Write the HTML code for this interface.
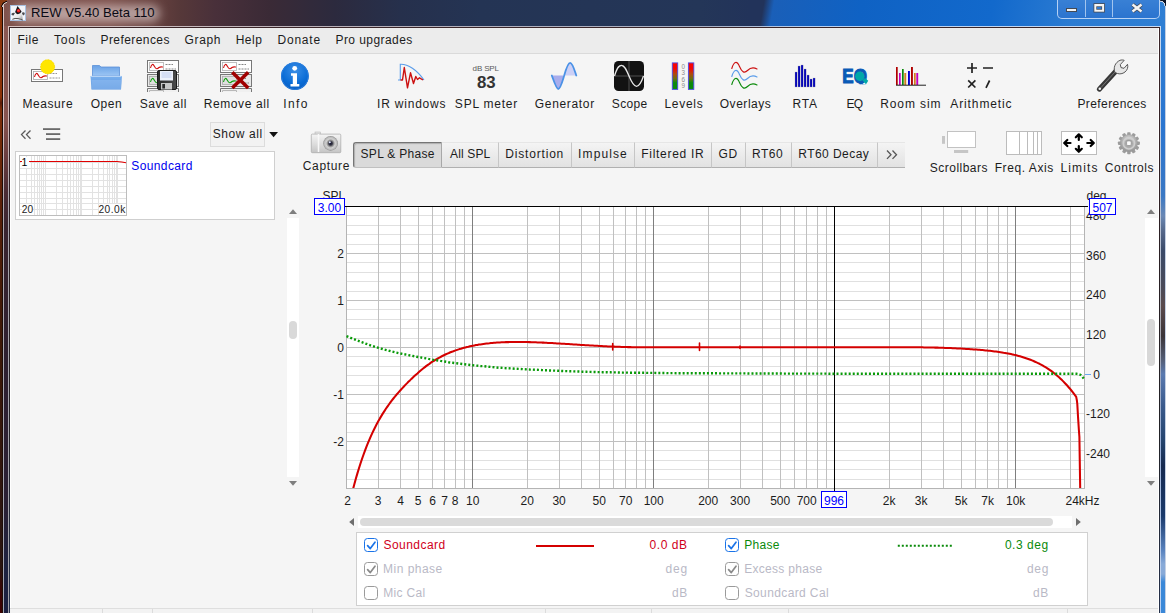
<!DOCTYPE html>
<html><head><meta charset="utf-8"><title>REW V5.40 Beta 110</title>
<style>
html,body{margin:0;padding:0}
body{width:1166px;height:613px;overflow:hidden;position:relative;background:#2b1812;font-family:"Liberation Sans",sans-serif;font-size:12px;letter-spacing:.25px;color:#1c1c1c}
.abs{position:absolute}
svg text{letter-spacing:0}
#frame{position:absolute;left:0;top:0;width:1166px;height:613px;overflow:hidden}
#client{position:absolute;left:10px;top:28px;width:1148px;height:585px;background:#f5f5f5}
.menu{position:absolute;left:11px;top:28px;width:1147px;height:25px;background:#ececec;border-bottom:1px solid #dadada}
.menu span{position:absolute;top:3.9px;line-height:15px;white-space:nowrap}
.t{position:absolute;white-space:nowrap;line-height:15px}
.ax{position:absolute;font-size:12px;letter-spacing:0;line-height:15px;white-space:nowrap;color:#1c1c1c}
.ax.r{text-align:right}.ax.c{text-align:center}
.tab{position:absolute;top:142px;height:26px;line-height:26px;box-sizing:border-box;background:linear-gradient(#f4f4f4,#e2e2e2);border-bottom:1px solid #b0b0b0;border-top:1px solid #e6e6e6;border-right:1px solid #c6c6c6;text-align:center;white-space:nowrap}
.tab span{position:relative;top:-1px}
.cb{position:absolute;width:12px;height:12px;border:1.3px solid #1a73e8;border-radius:3.5px;background:#fff}
.cb.g{border-color:#9a9a9a}
.lg{position:absolute;white-space:nowrap;line-height:15px}
.dis{color:#b9b9c6}
</style></head><body>
<div id="frame">
<!-- title bar background -->
<div class="abs" style="left:0;top:0;width:1166px;height:30px;background:linear-gradient(90deg,#7f524c 0,#7c4f4a 110px,#69423f 150px,#563839 180px,#49303a 215px,#3a2a36 270px,#2c2a3e 335px,#26304c 400px,#243454 480px,#243658 700px,#22335a 750px)"></div>
<div class="abs" style="left:740px;top:0;width:426px;height:30px;background:linear-gradient(100deg,rgba(0,0,0,0) 0,rgba(0,0,0,0) 24px,#1a5fb8 34px,#0f62c4 120px,#1269cc 250px,#2b7bd2 330px,#2f7fd4 100%)"></div>
<!-- title glow -->
<div class="abs" style="left:14px;top:5px;width:146px;height:17px;border-radius:9px;background:rgba(225,212,212,.62);filter:blur(5px)"></div>
<!-- left frame -->
<div class="abs" style="left:0;top:26px;width:10px;height:587px;background:linear-gradient(#8a5853 0,#86544f 95px,#6a3e40 130px,#4a2c34 165px,#3a2530 200px,#2e2030 330px,#2a2034 480px,#1e2240 540px,#1a2040 585px,#3a1030 606px)"></div>
<div class="abs" style="left:0;top:5px;width:3px;height:608px;background:linear-gradient(#8c3408 0,#8a3208 92px,#5a1c08 98px,#7c2e08 104px,#702a08 140px,#5a2008 200px,#421a08 300px,#3a1808 370px,#2e1610 500px,#2a1510 560px,#3a0404 590px,#3a0000 608px)"></div>
<div class="abs" style="left:2px;top:5px;width:1px;height:608px;background:#1c0c08"></div>
<div class="abs" style="left:3px;top:4px;width:1px;height:609px;background:linear-gradient(#dcc6c4 0,#d8c0c0 120px,#b0a8ae 200px,#a8a8b0 400px,#a0a4b4 609px)"></div>
<!-- right frame -->
<div class="abs" style="left:1159px;top:26px;width:7px;height:587px;background:linear-gradient(#2f7fd4 0,#2a75d0 100px,#3a78c4 170px,#6a88b4 190px,#55688a 205px,#3a4a68 225px,#4a4a58 262px,#5a4a4c 280px,#3a3438 310px,#55607a 335px,#5a7ab0 348px,#3a5a8c 380px,#24446e 415px,#162a50 440px,#1a3a6c 490px,#5a84c0 525px,#88aad8 538px,#88aad8 548px,#3a88d8 556px,#3a88d8 587px)"></div>
<div class="abs" style="left:1165px;top:4px;width:1px;height:609px;background:#c4d0e4"></div>
<!-- outer corners -->
<div class="abs" style="left:0;top:0;width:7px;height:7px;background:radial-gradient(circle at 7px 7px,rgba(0,0,0,0) 0,rgba(0,0,0,0) 3.6px,#d6c8c4 4px,#d6c8c4 4.6px,#1a0c08 5px,#1a0c08 5.6px,#8a3a10 6px)"></div>
<div class="abs" style="left:1160px;top:0;width:6px;height:6px;background:radial-gradient(circle at 0 6px,rgba(0,0,0,0) 0,rgba(0,0,0,0) 4.2px,#cfd8e6 4.6px,#cfd8e6 5.2px,#0a1428 5.6px)"></div>
<!-- client border -->
<div class="abs" style="left:8px;top:26px;width:1153px;height:587px;background:linear-gradient(#d8c4c2 0,#d0b8b8 100px,#a8a4ac 180px,#a0a0a8 587px)"></div>
<div class="abs" style="left:1160px;top:26px;width:1px;height:587px;background:linear-gradient(#c8daf2 0,#b8c0d0 230px,#a8a8b0 300px,#9ab0d8 420px,#c4d6f0 560px,#b0ccf4 587px)"></div>
<div class="abs" style="left:8px;top:26px;width:1153px;height:1px;background:linear-gradient(90deg,#d8c4c2 0,#b8b0b8 330px,#a8b0c4 700px,#b8d0f0 800px,#c8daf2 100%)"></div>
<div class="abs" style="left:9px;top:27px;width:1151px;height:586px;background:linear-gradient(#3a2528 0,#2c2024 200px,#222226 400px,#24304a 587px)"></div>
<div class="abs" style="left:10px;top:28px;width:1149px;height:585px;background:#fff"></div>
<div id="client" style="left:11px;width:1147px"></div>
<!-- title icon + text -->
<svg class="abs" style="left:10px;top:5px" width="16" height="16" viewBox="0 0 16 16">
<defs><linearGradient id="gDk" x1="0" y1="0" x2="1" y2="1"><stop offset="0" stop-color="#ffffff"/><stop offset="0.6" stop-color="#e6e6e6"/><stop offset="1" stop-color="#8c8c8c"/></linearGradient></defs>
<rect x="0" y="0" width="16" height="16" fill="#f3f5fa"/><rect x="0.500" y="0.500" width="15" height="15" fill="none" stroke="#a9c2e2"/>
<path d="M5 8 Q2.600 7.400 1.300 9 Q1.500 10.700 3.900 10.300 Z" fill="#4e4e52"/>
<path d="M11.800 7.800 Q13.500 6.400 14.800 8 Q14.900 10 13 10.600 Z" fill="#4e4e52"/>
<path d="M5.500 7.300 Q3.600 11 2.400 14.300 Q5 13 8 13.600 Q10.500 14.200 12.700 15.100 Q12.500 10.500 11.400 6.900 Q9 9.500 5.500 7.300Z" fill="url(#gDk)"/>
<path d="M2.400 14.300 Q5 13 8 13.600 Q10.500 14.200 12.700 15.100" fill="none" stroke="#3a3a3a" stroke-width="0.900"/>
<path d="M7.500 1 L5.100 7 Q6 9.400 8.300 9.100 Q10.600 8.700 11.600 6.600 Z" fill="#17171b"/>
<circle cx="8.500" cy="5.700" r="1.750" fill="#f21a1a"/><circle cx="8.200" cy="5.300" r="0.500" fill="#ff8a8a"/>
</svg>
<div class="abs" style="left:31px;top:4px;font-size:13.1px;letter-spacing:0;line-height:17px;color:#0a0a14;white-space:nowrap">REW V5.40 Beta 110</div>

<!-- window buttons -->
<div class="abs" style="left:1057px;top:-4px;width:101px;height:21px;border:1px solid rgba(205,225,250,.85);border-radius:0 0 5px 5px;background:linear-gradient(#3b82d6,#2b74cf)"></div>
<div class="abs" style="left:1085px;top:0;width:1px;height:17px;background:rgba(190,215,245,.8)"></div>
<div class="abs" style="left:1112px;top:0;width:1px;height:17px;background:rgba(190,215,245,.8)"></div>
<svg class="abs" style="left:1057px;top:0" width="103" height="18" viewBox="0 0 103 18">
<rect x="9.5" y="8.5" width="10" height="3" fill="#f4f4f4" stroke="#444a55"/>
<rect x="36.500" y="3.200" width="11.400" height="9.300" fill="#444a55"/><rect x="37.300" y="4" width="9.800" height="7.700" fill="#f4f4f4"/><rect x="39.300" y="6.300" width="5.800" height="3.400" fill="#444a55"/><rect x="40" y="7" width="4.400" height="2" fill="#2f78d0"/>
<path d="M75.500 4.500L84.500 11.500M84.500 4.500L75.500 11.500" stroke="#444a55" stroke-width="4"/>
<path d="M75.500 4.500L84.500 11.500M84.500 4.500L75.500 11.500" stroke="#f4f4f4" stroke-width="2.4"/>
</svg>

<!-- menu -->
<div class="menu"></div>


<!--ICONS_START--><!-- ICONS -->
<svg class="abs" style="left:0;top:56px" width="1166" height="40" viewBox="0 56 1166 40">
<defs>
<linearGradient id="gFold" x1="0" y1="0" x2="0" y2="1"><stop offset="0" stop-color="#6aa2e6"/><stop offset="1" stop-color="#9cc6f4"/></linearGradient>
<linearGradient id="gFoldB" x1="0" y1="0" x2="0" y2="1"><stop offset="0" stop-color="#7ab0ee"/><stop offset="1" stop-color="#5a96de"/></linearGradient>
<radialGradient id="gInfo" cx="0.5" cy="0.3" r="0.8"><stop offset="0" stop-color="#3a8ee6"/><stop offset="0.6" stop-color="#0a6cd6"/><stop offset="1" stop-color="#0a58b8"/></radialGradient>
<linearGradient id="gLev" x1="0" y1="0" x2="0" y2="1"><stop offset="0" stop-color="#ff0000"/><stop offset="0.22" stop-color="#f00808"/><stop offset="0.42" stop-color="#b04a10"/><stop offset="0.6" stop-color="#6a7010"/><stop offset="0.75" stop-color="#0a8a0a"/><stop offset="1" stop-color="#0a8a0a"/></linearGradient>
<linearGradient id="gFl" x1="0" y1="0" x2="1" y2="0"><stop offset="0" stop-color="#2a2a2a"/><stop offset="1" stop-color="#4a4a4a"/></linearGradient>
<linearGradient id="gWr" x1="0" y1="0" x2="1" y2="1"><stop offset="0" stop-color="#8a8a8a"/><stop offset="0.5" stop-color="#2a2a2a"/><stop offset="1" stop-color="#6a6a6a"/></linearGradient>
</defs>
<!-- Measure -->
<rect x="31.500" y="69.500" width="31" height="12" fill="#fff" stroke="#777" stroke-width="1"/>
<rect x="33.500" y="71.500" width="14" height="8" fill="#fff" stroke="#aaa" stroke-width="0.800"/>
<path d="M34.500 77 C35.500 72.500 37 72.500 38.500 75.500 C40 78.500 41.500 78 43 76.500 C44.500 75.500 46 76 47 76" fill="none" stroke="#d01010" stroke-width="1.100"/>
<path d="M49.500 73.500H57M49.500 78H60" stroke="#888" stroke-width="0.900" stroke-dasharray="2 1"/>
<circle cx="47.600" cy="66.800" r="7.200" fill="#ffe600"/>
<circle cx="47.600" cy="66.800" r="7" fill="none" stroke="#f4d400" stroke-width="0.800" stroke-dasharray="1.500 1.500"/>
<!-- Open -->
<path d="M92.500 65.500 H99.500 L101 67 H119.500 V76 H92.500 Z" fill="url(#gFold)" stroke="#5a90d8" stroke-width="0.800"/>
<path d="M90.500 76 H122 L121 89.500 H91.500 Z" fill="url(#gFoldB)"/>
<path d="M91 76.300H121.500" stroke="#c4dcf8" stroke-width="1"/>
<path d="M91.500 80 H121.200 L121 89.500 H91.700 Z" fill="#8fbcf0" opacity="0.550"/>
<!-- Save all -->
<g>
<rect x="147.500" y="60.500" width="31" height="12" fill="#fff" stroke="#777"/>
<rect x="149.500" y="62.500" width="14" height="8" fill="#fff" stroke="#b0b0b0" stroke-width="0.800"/>
<path d="M150.500 68 C151.500 63.500 153 63.500 154.500 66.500 C156 69.500 157.500 69 159 67.500 C160.500 66.500 162 67 163 67" fill="none" stroke="#d01010" stroke-width="1.100"/>
<path d="M165.500 64.500H173M165.500 69H176" stroke="#777" stroke-width="0.900" stroke-dasharray="2 1"/>
<rect x="147.500" y="74.500" width="31" height="12" fill="#e8e8e8" stroke="#777"/>
<rect x="149.500" y="76.500" width="14" height="8" fill="#e0e0e0" stroke="#aaa" stroke-width="0.800"/>
<path d="M150.500 82 C151.500 77.500 153 77.500 154.500 80.500 C156 83.500 157.500 83 159 81.500 C160.500 80.500 162 81 163 81" fill="none" stroke="#10a010" stroke-width="1.100"/>
<path d="M165.500 78.500H173M165.500 83H176" stroke="#777" stroke-width="0.900" stroke-dasharray="2 1"/>
<path d="M147.500 92 V88.500 H178.500 V92" fill="#f0f0f0" stroke="#777"/>
<path d="M149.500 92V90.500H163.500V92" fill="none" stroke="#aaa" stroke-width="0.800"/>
</g>
<rect x="157.500" y="70.500" width="19" height="19" rx="1.500" fill="url(#gFl)" stroke="#1a1a1a"/>
<rect x="160" y="71" width="13" height="9.500" fill="#eef2fc"/>
<path d="M161.500 73H171.500M161.500 75H171.500M161.500 77H171.500" stroke="#a0b4e4" stroke-width="0.600"/>
<rect x="161" y="83" width="11" height="6.500" fill="#c8c8c8"/>
<rect x="162.300" y="84" width="2.700" height="4.500" fill="#2a2a2a"/>
<!-- Remove all -->
<g transform="translate(73 0)">
<rect x="147.500" y="60.500" width="31" height="12" fill="#fff" stroke="#777"/>
<rect x="149.500" y="62.500" width="14" height="8" fill="#fff" stroke="#b0b0b0" stroke-width="0.800"/>
<path d="M150.500 68 C151.500 63.500 153 63.500 154.500 66.500 C156 69.500 157.500 69 159 67.500 C160.500 66.500 162 67 163 67" fill="none" stroke="#d01010" stroke-width="1.100"/>
<path d="M165.500 64.500H173M165.500 69H176" stroke="#777" stroke-width="0.900" stroke-dasharray="2 1"/>
<rect x="147.500" y="74.500" width="31" height="12" fill="#e8e8e8" stroke="#777"/>
<rect x="149.500" y="76.500" width="14" height="8" fill="#e0e0e0" stroke="#aaa" stroke-width="0.800"/>
<path d="M150.500 82 C151.500 77.500 153 77.500 154.500 80.500 C156 83.500 157.500 83 159 81.500 C160.500 80.500 162 81 163 81" fill="none" stroke="#10a010" stroke-width="1.100"/>
<path d="M165.500 78.500H173M165.500 83H176" stroke="#777" stroke-width="0.900" stroke-dasharray="2 1"/>
<path d="M147.500 92 V88.500 H178.500 V92" fill="#f0f0f0" stroke="#777"/>
<path d="M149.500 92V90.500H163.500V92" fill="none" stroke="#aaa" stroke-width="0.800"/>
</g>
<path d="M232.300 72.200L248.200 88M248.200 72.200L232.300 88" stroke="#a00000" stroke-width="3.500"/>
<!-- Info -->
<circle cx="294.900" cy="76.100" r="13.900" fill="url(#gInfo)"/>
<circle cx="294.900" cy="76.100" r="13.400" fill="none" stroke="#2a7ede" stroke-width="1"/>
<circle cx="294.700" cy="68.300" r="2.400" fill="#fff"/>
<path d="M291 73.200H297V84H299.300V86.600H290.500V84H292.800V75.800H291Z" fill="#fff"/>
<!-- IR windows -->
<path d="M398 80H400.300V64.200C408 63.800 417 70 424 80" fill="none" stroke="#5a9cea" stroke-width="1.100"/>
<path d="M400.500 80H402.500L404.300 67.500L407.500 87.800L410.500 72.800L413.500 83.500L415.800 76.500L417.500 79.500L419.500 77.800L423 80" fill="none" stroke="#cc1010" stroke-width="1.400" stroke-linejoin="round"/>
<!-- SPL meter -->
<text x="472.600" y="71.300" font-size="8" fill="#5a5a5a" font-family="Liberation Sans, sans-serif" textLength="26.400" lengthAdjust="spacing">dB SPL</text>
<text x="486.300" y="88.200" font-size="16.800" font-weight="bold" fill="#333" text-anchor="middle" font-family="Liberation Sans, sans-serif">83</text>
<!-- Generator -->
<path d="M551.800 75.500 C554.500 83 556.500 89 558.200 89 C560.500 89 562.500 81 564.200 75.500 Z" fill="#9aa0ea" opacity="0.850"/>
<path d="M564.200 75.500 C566 69 568 62.800 570.200 62.800 C572.500 62.800 574.500 70 576.300 75.500 Z" fill="#c8ccf6" opacity="0.900"/>
<path d="M551.800 75.500 C554.500 83 556.500 89 558.200 89 C560.500 89 562.500 81 564.200 75.500 C566 69 568 62.800 570.200 62.800 C572.500 62.800 574.500 70 576.300 75.500" fill="none" stroke="#4a92e6" stroke-width="1.800" stroke-linecap="round"/>
<!-- Scope -->
<rect x="614" y="61" width="30" height="30" rx="4.500" fill="#121212"/>
<path d="M614 76H644M629 61V91" stroke="#6a6a6a" stroke-width="0.700"/>
<path d="M614.500 76 C617.500 66 619.500 65.300 621.500 65.300 C624.500 65.300 626.500 70 629 76 C631.500 82 633.500 86.300 636.500 86.300 C638.500 86.300 640.500 85 643.500 76" fill="none" stroke="#e8e8e8" stroke-width="1.300"/>
<!-- Levels -->
<rect x="672.300" y="62.900" width="5.400" height="26.500" fill="url(#gLev)" stroke="#4a4ae6" stroke-width="0.900"/>
<rect x="688.400" y="62.900" width="5.400" height="26.500" fill="url(#gLev)" stroke="#4a4ae6" stroke-width="0.900"/>
<g font-size="6.300" fill="#8a8a8a" text-anchor="middle" font-family="Liberation Sans, sans-serif"><text x="683.200" y="68.800">0</text><text x="683.200" y="75.200">3</text><text x="683.200" y="81.600">6</text><text x="683.200" y="88">9</text></g>
<!-- Overlays -->
<g fill="none" stroke-width="1.150" stroke-linecap="round">
<path d="M731.800 68.500 C734 61 737 60.500 739.500 66.500 C742 72.500 744.500 73.500 747.500 70.500 C751 67 754 67.500 757 69" stroke="#cc1010"/>
<path d="M731.800 76.500 C734 69 737 68.500 739.500 74.500 C742 80.500 744.500 81.500 747.500 78.500 C751 75 754 75.500 757 77" stroke="#5a9cea"/>
<path d="M731.800 84.500 C734 77 737 76.500 739.500 82.500 C742 88.500 744.500 89.500 747.500 86.500 C751 83 754 83.500 757 85" stroke="#0a8a0a"/>
</g>
<!-- RTA -->
<g fill="#0000b8" stroke="#aaa" stroke-width="0.300">
<rect x="795" y="72" width="2.100" height="15"/><rect x="798" y="66" width="2.100" height="21"/><rect x="801" y="65" width="2.100" height="22"/><rect x="804" y="69" width="2.100" height="18"/><rect x="807" y="75" width="2.100" height="12"/><rect x="810" y="79" width="2.100" height="8"/><rect x="813" y="78" width="2.100" height="9"/>
</g>
<!-- EQ -->
<clipPath id="eqc"><rect x="838" y="60" width="34" height="24.300"/></clipPath>
<g clip-path="url(#eqc)">
<text x="842.300" y="83.400" font-size="20" font-weight="bold" fill="#0a5ab6" stroke="#0a5ab6" stroke-width="1.100" font-family="Liberation Sans, sans-serif" textLength="24.600" lengthAdjust="spacingAndGlyphs">EQ</text>
</g>
<circle cx="859.800" cy="76.200" r="4.700" fill="#00a8a8"/>
<path d="M862.300 80.300 L866 84.300 L868.200 80.800 L865 78 Z" fill="#00a8a8"/>
<!-- Room sim -->
<g>
<rect x="896" y="67" width="1.700" height="18" fill="#b00000"/><rect x="899" y="73" width="1.700" height="12" fill="#c000c0"/><rect x="902" y="69" width="1.700" height="16" fill="#0a8a0a"/><rect x="904.300" y="73" width="1.900" height="12" fill="#d08020"/><rect x="908" y="71" width="1.900" height="14" fill="#0000d0"/><rect x="911" y="67" width="1.900" height="18" fill="#b00000"/><rect x="914" y="73" width="1.700" height="12" fill="#d08020"/><rect x="916.300" y="73" width="1.900" height="12" fill="#c000c0"/>
<rect x="896" y="84.700" width="30" height="1" fill="#222"/>
</g>
<!-- Arithmetic -->
<path d="M967 68H977M972 63V73M983 68H993M968.200 80.300L975.400 87.500M975.400 80.300L968.200 87.500M989.600 80.500L986 87.800" stroke="#222" stroke-width="1.700" fill="none"/>
<!-- Preferences wrench -->
<path d="M1099.300 89.200 L1116 71" stroke="url(#gWr)" stroke-width="5" stroke-linecap="round"/>
<path d="M1099.300 89.200 L1116 71" stroke="#3a3a3a" stroke-width="3.200" stroke-linecap="round"/>
<path d="M1101 87.500 L1115 72" stroke="#7a7a7a" stroke-width="0.900" stroke-linecap="round"/>
<circle cx="1099.800" cy="88.800" r="1.300" fill="#f0f0f0"/>
<path d="M1115 72.500 C1113 68 1115 62.500 1120 60.300 C1121.500 59.800 1123 59.900 1124.200 60.300 L1120.300 64.600 L1121 67.600 L1124 68.300 L1127.500 64.300 C1128.300 67 1127.500 70 1125 72 C1122.500 74 1119.500 74.200 1117.500 73.500 Z" fill="#e6e6e6" stroke="#4a4a4a" stroke-width="0.900"/>
</svg>

<!-- second row icons -->
<svg class="abs" style="left:300px;top:126px" width="860" height="34" viewBox="300 126 860 34">
<defs>
<linearGradient id="gCam" x1="0" y1="0" x2="0" y2="1"><stop offset="0" stop-color="#f4f4f4"/><stop offset="0.55" stop-color="#dcdcdc"/><stop offset="1" stop-color="#c4c4c4"/></linearGradient>
<radialGradient id="gLens" cx="0.5" cy="0.5" r="0.5"><stop offset="0" stop-color="#101028"/><stop offset="0.25" stop-color="#3a3a48"/><stop offset="0.42" stop-color="#8e8e8e"/><stop offset="0.62" stop-color="#d2d2d2"/><stop offset="0.85" stop-color="#bcbcbc"/><stop offset="1" stop-color="#8c8c8c"/></radialGradient>
<radialGradient id="gGear" cx="0.5" cy="0.35" r="0.7"><stop offset="0" stop-color="#dcdcdc"/><stop offset="1" stop-color="#8e8e8e"/></radialGradient>
</defs>
<!-- camera -->
<rect x="315" y="132" width="5.500" height="2.500" fill="#e4e4e4" stroke="#b0b0b0" stroke-width="0.500"/>
<rect x="311.300" y="134.100" width="29.500" height="18.600" rx="1" fill="url(#gCam)" stroke="#a8a8a8" stroke-width="0.700"/>
<path d="M318.500 134V152" stroke="#f8f8f8" stroke-width="1.500"/>
<circle cx="330.600" cy="143.400" r="7.300" fill="url(#gLens)"/>
<circle cx="329.800" cy="142.300" r="1" fill="#dfe6ff"/>
<!-- Scrollbars -->
<rect x="947.500" y="131.500" width="28" height="16" fill="#fff" stroke="#c2c2c2"/>
<rect x="942" y="136" width="3" height="7.800" fill="#c6c6c6"/>
<rect x="954" y="150" width="14.200" height="3" fill="#c6c6c6"/>
<!-- Freq axis -->
<rect x="1006.500" y="131.500" width="35" height="23" fill="#fff" stroke="#bcbcbc"/>
<path d="M1019.500 131.500V154.500M1027.500 131.500V154.500M1033.500 131.500V154.500M1037.500 131.500V154.500" stroke="#bcbcbc" shape-rendering="crispEdges"/>
<!-- Limits -->
<rect x="1061.500" y="131.500" width="35" height="23" fill="#fff" stroke="#bcbcbc"/>
<g stroke="#000" stroke-width="2.200" fill="none" stroke-linecap="round" stroke-linejoin="round">
<path d="M1078.800 140V134.600M1075.800 137.300L1078.800 134.300L1081.800 137.300"/>
<path d="M1078.800 146V151.600M1075.800 148.800L1078.800 151.800L1081.800 148.800"/>
<path d="M1070.500 143H1064.500M1067.300 140L1064.200 143L1067.300 146"/>
<path d="M1087.300 143H1093.500M1090.700 140L1093.800 143L1090.700 146"/>
</g>
<!-- Controls gear -->
<g transform="translate(1128.900 143.200)">
<g fill="#9c9c9c">
<rect x="-1.700" y="-11" width="3.400" height="22" rx="0.800"/>
<rect x="-1.700" y="-11" width="3.400" height="22" rx="0.800" transform="rotate(30)"/>
<rect x="-1.700" y="-11" width="3.400" height="22" rx="0.800" transform="rotate(60)"/>
<rect x="-1.700" y="-11" width="3.400" height="22" rx="0.800" transform="rotate(90)"/>
<rect x="-1.700" y="-11" width="3.400" height="22" rx="0.800" transform="rotate(120)"/>
<rect x="-1.700" y="-11" width="3.400" height="22" rx="0.800" transform="rotate(150)"/>
</g>
<circle r="8.700" fill="url(#gGear)"/>
<circle r="8.700" fill="none" stroke="#9a9a9a" stroke-width="0.500"/>
<circle r="5.700" fill="none" stroke="#cfcfcf" stroke-width="1.500"/>
<circle r="4" fill="#a8a8a8"/>
<rect x="-2.300" y="-2.300" width="4.600" height="4.600" rx="1.200" fill="#fbfbfb" stroke="#8e8e8e" stroke-width="0.700"/>
</g>
</svg>
<!--ICONS_END-->

<!-- left panel -->
<svg class="abs" style="left:18px;top:124px" width="48" height="20" viewBox="0 0 48 20">
<path d="M7.500 6.500L3.500 10.600L7.500 14.700M12.500 6.500L8.500 10.600L12.500 14.700" fill="none" stroke="#5a5a5a" stroke-width="1.300"/>
<g fill="#6a6a6a"><rect x="25" y="4.200" width="17.200" height="1.800"/><rect x="28" y="9.200" width="14.200" height="1.800"/><rect x="28" y="14.200" width="14.200" height="1.800"/></g>
</svg>
<div class="abs" style="left:210px;top:122px;width:53px;height:23px;border:1px solid #dcdcdc;background:#f2f2f2;"></div>
<svg class="abs" style="left:268px;top:131px" width="12" height="8" viewBox="0 0 12 8"><path d="M1.200 1L10 1L5.600 6.300Z" fill="#111"/></svg>
<div class="abs" style="left:15px;top:151px;width:260px;height:69px;box-sizing:border-box;border:1px solid #cfcfcf;background:#fff"></div>
<svg class="abs" style="left:19px;top:155px" width="108" height="61" viewBox="0 0 108 61"><rect x="0.5" y="0.5" width="107" height="60" fill="#fff" stroke="#bdbdbd"/><g shape-rendering="crispEdges" fill="#e2e2e2">
<rect x="7" y="1" width="1" height="59"/>
<rect x="12" y="1" width="1" height="59"/>
<rect x="15" y="1" width="1" height="59"/>
<rect x="18" y="1" width="1" height="59"/>
<rect x="20" y="1" width="1" height="59"/>
<rect x="22" y="1" width="1" height="59"/>
<rect x="24" y="1" width="1" height="59"/>
<rect x="26" y="1" width="1" height="59"/>
<rect x="37" y="1" width="1" height="59"/>
<rect x="43" y="1" width="1" height="59"/>
<rect x="48" y="1" width="1" height="59"/>
<rect x="51" y="1" width="1" height="59"/>
<rect x="54" y="1" width="1" height="59"/>
<rect x="57" y="1" width="1" height="59"/>
<rect x="59" y="1" width="1" height="59"/>
<rect x="61" y="1" width="1" height="59"/>
<rect x="62" y="1" width="1" height="59"/>
<rect x="73" y="1" width="1" height="59"/>
<rect x="79" y="1" width="1" height="59"/>
<rect x="84" y="1" width="1" height="59"/>
<rect x="88" y="1" width="1" height="59"/>
<rect x="90" y="1" width="1" height="59"/>
<rect x="93" y="1" width="1" height="59"/>
<rect x="95" y="1" width="1" height="59"/>
<rect x="97" y="1" width="1" height="59"/>
<rect x="98" y="1" width="1" height="59"/>
<rect x="1" y="7" width="106" height="1"/>
<rect x="1" y="13" width="106" height="1"/>
<rect x="1" y="19" width="106" height="1"/>
<rect x="1" y="25" width="106" height="1"/>
<rect x="1" y="31" width="106" height="1"/>
<rect x="1" y="37" width="106" height="1"/>
<rect x="1" y="43" width="106" height="1"/>
<rect x="1" y="48" width="106" height="1"/>
<rect x="1" y="54" width="106" height="1"/>
</g><rect x="2" y="2" width="9" height="11" fill="#fff"/><path d="M1 6.5H3M10 6.5H98C102 6.6 105 7.2 107 7.8" stroke="#e00000" stroke-width="1.2" fill="none"/></svg>
<div class="abs" style="left:21.5px;top:155.5px;font-size:10.5px;line-height:12px;color:#000">1</div>
<div class="abs" style="left:21.700px;top:203.500px;font-size:10.200px;line-height:11px;color:#222;letter-spacing:.2px;background:#fff">20</div>
<div class="abs" style="left:98.500px;top:203.500px;font-size:10.200px;line-height:11px;color:#222;letter-spacing:.45px;background:#fff">20.0k</div>

<!-- left vertical scrollbar -->
<div class="abs" style="left:287px;top:218px;width:12px;height:259px;background:#fff"></div>
<div class="abs" style="left:289px;top:321px;width:8px;height:18px;border-radius:4px;background:#d9d9d9"></div>
<svg class="abs" style="left:288px;top:208px" width="10" height="7" viewBox="0 0 10 7"><path d="M1 6L5 1.200L9 6Z" fill="#7e7e7e"/></svg>
<svg class="abs" style="left:288px;top:480px" width="10" height="7" viewBox="0 0 10 7"><path d="M1 1L5 5.800L9 1Z" fill="#7e7e7e"/></svg>
<!-- right vertical scrollbar -->
<div class="abs" style="left:1145px;top:218px;width:13px;height:259px;background:#fff"></div>
<div class="abs" style="left:1147px;top:319px;width:8px;height:47px;border-radius:4px;background:#d8d8d8"></div>
<svg class="abs" style="left:1146px;top:208px" width="10" height="7" viewBox="0 0 10 7"><path d="M1 6L5 1.200L9 6Z" fill="#7e7e7e"/></svg>
<svg class="abs" style="left:1146px;top:480px" width="10" height="7" viewBox="0 0 10 7"><path d="M1 1L5 5.800L9 1Z" fill="#7e7e7e"/></svg>

<!-- capture -->

<!-- tabs -->
<div class="tab" style="left:353px;width:89px;background:#dadada;border:1px solid #757575;border-right-color:#a8a8a8;border-bottom-color:#c0c0c0;border-radius:3px 0 0 3px;box-shadow:inset 1px 1px 1px rgba(0,0,0,.2)"></div>
<div class="tab" style="left:442px;width:57px"></div>
<div class="tab" style="left:499px;width:73px"></div>
<div class="tab" style="left:572px;width:63px"></div>
<div class="tab" style="left:635px;width:77px"></div>
<div class="tab" style="left:712px;width:34px"></div>
<div class="tab" style="left:746px;width:46px"></div>
<div class="tab" style="left:792px;width:86px"></div>
<div class="tab" style="left:878px;width:27px;border-right:none"></div>
<svg class="abs" style="left:884px;top:146.6px" width="16" height="16" viewBox="0 0 16 16"><path d="M3 3.500L7 7.700L3 11.900M8.500 3.500L12.500 7.700L8.500 11.900" fill="none" stroke="#555" stroke-width="1.300"/></svg>

<!-- right tool labels -->

<!-- chart -->
<div class="ax" style="left:322.500px;top:189px">SPL</div>
<div class="ax" style="left:1086.5px;top:189px">deg</div>
<svg class="abs" style="left:0;top:0" width="1166" height="613" viewBox="0 0 1166 613">
<rect x="346" y="206" width="739" height="282" fill="#fff"/>
<g shape-rendering="crispEdges">
<rect x="346" y="479" width="739" height="1" fill="#e0e0e0"/>
<rect x="346" y="469" width="739" height="1" fill="#e0e0e0"/>
<rect x="346" y="460" width="739" height="1" fill="#e0e0e0"/>
<rect x="346" y="450" width="739" height="1" fill="#e0e0e0"/>
<rect x="346" y="441" width="739" height="1" fill="#c0c0c0"/>
<rect x="346" y="432" width="739" height="1" fill="#e0e0e0"/>
<rect x="346" y="422" width="739" height="1" fill="#e0e0e0"/>
<rect x="346" y="413" width="739" height="1" fill="#e0e0e0"/>
<rect x="346" y="403" width="739" height="1" fill="#e0e0e0"/>
<rect x="346" y="394" width="739" height="1" fill="#c0c0c0"/>
<rect x="346" y="385" width="739" height="1" fill="#e0e0e0"/>
<rect x="346" y="375" width="739" height="1" fill="#e0e0e0"/>
<rect x="346" y="366" width="739" height="1" fill="#e0e0e0"/>
<rect x="346" y="356" width="739" height="1" fill="#e0e0e0"/>
<rect x="346" y="347" width="739" height="1" fill="#c0c0c0"/>
<rect x="346" y="338" width="739" height="1" fill="#e0e0e0"/>
<rect x="346" y="328" width="739" height="1" fill="#e0e0e0"/>
<rect x="346" y="319" width="739" height="1" fill="#e0e0e0"/>
<rect x="346" y="309" width="739" height="1" fill="#e0e0e0"/>
<rect x="346" y="300" width="739" height="1" fill="#c0c0c0"/>
<rect x="346" y="291" width="739" height="1" fill="#e0e0e0"/>
<rect x="346" y="281" width="739" height="1" fill="#e0e0e0"/>
<rect x="346" y="272" width="739" height="1" fill="#e0e0e0"/>
<rect x="346" y="262" width="739" height="1" fill="#e0e0e0"/>
<rect x="346" y="253" width="739" height="1" fill="#c0c0c0"/>
<rect x="346" y="244" width="739" height="1" fill="#e0e0e0"/>
<rect x="346" y="234" width="739" height="1" fill="#e0e0e0"/>
<rect x="346" y="225" width="739" height="1" fill="#e0e0e0"/>
<rect x="346" y="215" width="739" height="1" fill="#e0e0e0"/>
<rect x="378" y="206" width="1" height="282" fill="#c0c0c0"/>
<rect x="400" y="206" width="1" height="282" fill="#c0c0c0"/>
<rect x="418" y="206" width="1" height="282" fill="#c0c0c0"/>
<rect x="432" y="206" width="1" height="282" fill="#c0c0c0"/>
<rect x="444" y="206" width="1" height="282" fill="#c0c0c0"/>
<rect x="455" y="206" width="1" height="282" fill="#c0c0c0"/>
<rect x="464" y="206" width="1" height="282" fill="#c0c0c0"/>
<rect x="472" y="206" width="1" height="282" fill="#7e7e7e"/>
<rect x="527" y="206" width="1" height="282" fill="#c0c0c0"/>
<rect x="559" y="206" width="1" height="282" fill="#c0c0c0"/>
<rect x="581" y="206" width="1" height="282" fill="#c0c0c0"/>
<rect x="599" y="206" width="1" height="282" fill="#c0c0c0"/>
<rect x="613" y="206" width="1" height="282" fill="#c0c0c0"/>
<rect x="625" y="206" width="1" height="282" fill="#c0c0c0"/>
<rect x="636" y="206" width="1" height="282" fill="#c0c0c0"/>
<rect x="645" y="206" width="1" height="282" fill="#c0c0c0"/>
<rect x="653" y="206" width="1" height="282" fill="#7e7e7e"/>
<rect x="708" y="206" width="1" height="282" fill="#c0c0c0"/>
<rect x="740" y="206" width="1" height="282" fill="#c0c0c0"/>
<rect x="762" y="206" width="1" height="282" fill="#c0c0c0"/>
<rect x="780" y="206" width="1" height="282" fill="#c0c0c0"/>
<rect x="794" y="206" width="1" height="282" fill="#c0c0c0"/>
<rect x="806" y="206" width="1" height="282" fill="#c0c0c0"/>
<rect x="817" y="206" width="1" height="282" fill="#c0c0c0"/>
<rect x="826" y="206" width="1" height="282" fill="#c0c0c0"/>
<rect x="834" y="206" width="1" height="282" fill="#7e7e7e"/>
<rect x="889" y="206" width="1" height="282" fill="#c0c0c0"/>
<rect x="921" y="206" width="1" height="282" fill="#c0c0c0"/>
<rect x="943" y="206" width="1" height="282" fill="#c0c0c0"/>
<rect x="961" y="206" width="1" height="282" fill="#c0c0c0"/>
<rect x="975" y="206" width="1" height="282" fill="#c0c0c0"/>
<rect x="987" y="206" width="1" height="282" fill="#c0c0c0"/>
<rect x="998" y="206" width="1" height="282" fill="#c0c0c0"/>
<rect x="1007" y="206" width="1" height="282" fill="#c0c0c0"/>
<rect x="1015" y="206" width="1" height="282" fill="#7e7e7e"/>
<rect x="1070" y="206" width="1" height="282" fill="#c0c0c0"/>
<rect x="346" y="206" width="1" height="283" fill="#b4b4b4"/>
<rect x="1084" y="206" width="1" height="283" fill="#b4b4b4"/>
<rect x="346" y="488" width="739" height="1" fill="#b4b4b4"/>
<rect x="345" y="206" width="743" height="1" fill="#000"/>
<rect x="834" y="206" width="1" height="286" fill="#000"/>
<rect x="1085" y="374" width="6" height="1" fill="#6aa8f0"/>
</g>
<clipPath id="pc"><rect x="346" y="206" width="739" height="282"/></clipPath>
<g clip-path="url(#pc)" fill="none" stroke-linejoin="round" stroke-linecap="round">
<polyline points="352.4,491.0 352.9,489.6 354.4,484.0 355.9,478.6 357.4,473.4 358.9,468.5 360.4,463.8 361.9,459.3 363.4,455.0 364.9,450.9 366.4,446.9 367.9,443.2 369.4,439.6 370.9,436.2 372.4,432.9 373.9,429.7 375.4,426.7 376.9,423.8 378.4,421.1 379.9,418.4 381.4,415.9 382.9,413.4 384.4,411.1 385.9,408.8 387.4,406.6 388.9,404.5 390.4,402.4 391.9,400.4 393.4,398.5 394.9,396.7 396.4,394.8 397.9,393.1 399.4,391.4 400.9,389.7 402.4,388.1 403.9,386.5 405.4,384.9 406.9,383.4 408.4,381.8 409.9,380.4 411.4,378.9 412.9,377.5 414.4,376.1 415.9,374.7 417.4,373.4 418.9,372.0 420.4,370.7 421.9,369.5 423.4,368.3 424.9,367.1 426.4,365.9 427.9,364.8 429.4,363.8 430.9,362.7 432.4,361.7 433.9,360.8 435.4,359.8 436.9,359.0 438.4,358.1 439.9,357.3 441.4,356.5 442.9,355.7 444.4,355.0 445.9,354.3 447.4,353.6 448.9,353.0 450.4,352.3 451.9,351.7 453.4,351.2 454.9,350.6 456.4,350.1 457.9,349.6 459.4,349.1 460.9,348.7 462.4,348.2 463.9,347.8 465.4,347.4 466.9,347.0 468.4,346.7 469.9,346.3 471.4,346.0 472.9,345.7 474.4,345.4 475.9,345.1 477.4,344.9 478.9,344.6 480.4,344.4 481.9,344.2 483.4,344.0 484.9,343.8 486.4,343.6 487.9,343.4 489.4,343.3 490.9,343.1 492.4,343.0 493.9,342.8 495.4,342.7 496.9,342.6 498.4,342.5 499.9,342.4 501.4,342.3 502.9,342.3 504.4,342.2 505.9,342.1 507.4,342.1 508.9,342.1 510.4,342.0 511.9,342.0 513.4,342.0 514.9,342.0 516.4,341.9 517.9,341.9 519.4,341.9 520.9,342.0 522.4,342.0 523.9,342.0 525.4,342.0 526.9,342.0 528.4,342.1 529.9,342.1 531.4,342.2 532.9,342.2 534.4,342.3 535.9,342.3 537.4,342.4 538.9,342.4 540.4,342.5 541.9,342.6 543.4,342.6 544.9,342.7 546.4,342.8 547.9,342.9 549.4,343.0 550.9,343.0 552.4,343.1 553.9,343.2 555.4,343.3 556.9,343.4 558.4,343.5 559.9,343.6 561.4,343.7 562.9,343.7 564.4,343.8 565.9,343.9 567.4,344.0 568.9,344.1 570.4,344.2 571.9,344.3 573.4,344.4 574.9,344.5 576.4,344.6 577.9,344.7 579.4,344.8 580.9,344.9 582.4,345.0 583.9,345.1 585.4,345.2 586.9,345.2 588.4,345.3 589.9,345.4 591.4,345.5 592.9,345.6 594.4,345.7 595.9,345.8 597.4,345.8 598.9,345.9 600.4,346.0 601.9,346.1 603.4,346.2 604.9,346.2 606.4,346.3 607.9,346.4 609.4,346.4 610.9,346.5 612.4,346.6 613.9,346.6 615.4,346.7 616.9,346.7 618.4,346.8 619.9,346.8 621.4,346.9 622.9,346.9 624.4,347.0 625.9,347.0 627.4,347.1 628.9,347.1 630.4,347.1 631.9,347.2 633.4,347.2 634.9,347.2 636.4,347.3 637.9,347.3 639.4,347.3 640.0,347.3 646.0,347.3 652.0,347.3 658.0,347.3 664.0,347.3 670.0,347.3 676.0,347.3 682.0,347.3 688.0,347.3 694.0,347.3 700.0,347.3 706.0,347.3 712.0,347.3 718.0,347.3 724.0,347.3 730.0,347.3 736.0,347.3 742.0,347.3 748.0,347.2 754.0,347.2 760.0,347.2 766.0,347.2 772.0,347.2 778.0,347.2 784.0,347.2 790.0,347.2 796.0,347.2 802.0,347.2 808.0,347.2 814.0,347.2 820.0,347.2 826.0,347.2 832.0,347.2 834.0,347.2 835.5,347.2 837.0,347.2 838.5,347.2 840.0,347.3 841.5,347.3 843.0,347.3 844.5,347.3 846.0,347.3 847.5,347.3 849.0,347.3 850.5,347.3 852.0,347.3 853.5,347.3 855.0,347.3 856.5,347.3 858.0,347.3 859.5,347.3 861.0,347.3 862.5,347.3 864.0,347.3 865.5,347.3 867.0,347.3 868.5,347.3 870.0,347.3 871.5,347.3 873.0,347.3 874.5,347.3 876.0,347.3 877.5,347.2 879.0,347.2 880.5,347.2 882.0,347.2 883.5,347.2 885.0,347.2 886.5,347.2 888.0,347.2 889.5,347.2 891.0,347.2 892.5,347.2 894.0,347.2 895.5,347.2 897.0,347.2 898.5,347.2 900.0,347.2 901.5,347.2 903.0,347.2 904.5,347.2 906.0,347.2 907.5,347.2 909.0,347.2 910.5,347.2 912.0,347.2 913.5,347.2 915.0,347.2 916.5,347.3 918.0,347.3 919.5,347.3 921.0,347.3 922.5,347.3 924.0,347.4 925.5,347.4 927.0,347.4 928.5,347.4 930.0,347.5 931.5,347.5 933.0,347.5 934.5,347.6 936.0,347.6 937.5,347.6 939.0,347.7 940.5,347.7 942.0,347.8 943.5,347.8 945.0,347.9 946.5,347.9 948.0,348.0 949.5,348.0 951.0,348.1 952.5,348.2 954.0,348.2 955.5,348.3 957.0,348.4 958.5,348.4 960.0,348.5 961.5,348.6 963.0,348.7 964.5,348.8 966.0,348.9 967.5,349.0 969.0,349.1 970.5,349.2 972.0,349.3 973.5,349.4 975.0,349.5 976.5,349.6 978.0,349.7 979.5,349.8 981.0,350.0 982.5,350.1 984.0,350.2 985.5,350.4 987.0,350.5 988.5,350.7 990.0,350.8 991.5,351.0 993.0,351.2 994.5,351.4 996.0,351.6 997.5,351.8 999.0,352.0 1000.5,352.2 1002.0,352.4 1003.5,352.7 1005.0,352.9 1006.5,353.2 1008.0,353.5 1009.5,353.8 1011.0,354.1 1012.5,354.4 1014.0,354.8 1015.5,355.1 1017.0,355.5 1018.5,355.9 1020.0,356.3 1021.5,356.7 1023.0,357.2 1024.5,357.7 1026.0,358.2 1027.5,358.7 1029.0,359.2 1030.5,359.8 1032.0,360.4 1033.5,361.0 1035.0,361.7 1036.5,362.4 1038.0,363.1 1039.5,363.8 1041.0,364.6 1042.5,365.4 1044.0,366.3 1045.5,367.2 1047.0,368.1 1048.5,369.1 1050.0,370.1 1051.5,371.2 1053.0,372.3 1054.5,373.5 1056.0,374.7 1057.5,376.0 1059.0,377.3 1060.5,378.7 1062.0,380.1 1063.5,381.6 1065.0,383.2 1066.5,384.8 1068.0,386.5 1069.5,388.2 1071.0,390.0 1072.5,391.9 1074.0,393.9 1075.5,395.9 1076.2,396.9 1076.9,400.5 1077.3,404.0 1078.0,416.4 1078.9,430.3 1079.4,437.0 1080.2,488.5 1080.3,491.0" stroke="#d40000" stroke-width="2.05"/>
<path d="M612.7 343.5V350M699.5 343V350.5M740 346v2.4" stroke="#d40000" stroke-width="1.6"/>
<polyline points="346.5,336.2 348.5,337.0 350.5,337.8 352.5,338.6 354.5,339.3 356.5,340.1 358.5,340.9 360.5,341.7 362.5,342.4 364.5,343.2 366.5,343.9 368.5,344.7 370.5,345.4 372.5,346.1 374.5,346.7 376.5,347.3 378.5,347.9 380.5,348.5 382.5,349.0 384.5,349.6 386.5,350.1 388.5,350.6 390.5,351.2 392.5,351.7 394.5,352.2 396.5,352.6 398.5,353.1 400.5,353.5 402.5,353.9 404.5,354.3 406.5,354.7 408.5,355.1 410.5,355.5 412.5,355.9 414.5,356.3 416.5,356.7 418.5,357.1 420.5,357.4 422.5,357.8 424.5,358.1 426.5,358.5 428.5,358.9 430.5,359.2 432.5,359.6 434.5,359.9 436.5,360.2 438.5,360.5 440.5,360.9 442.5,361.2 444.5,361.5 446.5,361.8 448.5,362.2 450.5,362.5 452.5,362.7 454.5,363.0 456.5,363.2 458.5,363.5 460.5,363.7 462.5,364.0 464.5,364.2 466.5,364.5 468.5,364.7 470.5,365.0 472.5,365.2 474.5,365.4 476.5,365.6 478.5,365.8 480.5,366.0 482.5,366.1 484.5,366.3 486.5,366.5 488.5,366.7 490.5,366.9 492.5,367.1 494.5,367.3 496.5,367.5 498.5,367.7 500.5,367.8 502.5,367.9 504.5,368.1 506.5,368.2 508.5,368.3 510.5,368.4 512.5,368.5 514.5,368.7 516.5,368.8 518.5,368.9 520.5,369.0 522.5,369.1 524.5,369.3 526.5,369.4 528.5,369.5 530.5,369.6 532.5,369.6 534.5,369.7 536.5,369.8 538.5,369.9 540.5,370.0 542.5,370.1 544.5,370.2 546.5,370.3 548.5,370.4 550.5,370.5 552.5,370.6 554.5,370.6 556.5,370.7 558.5,370.8 560.5,370.9 562.5,371.0 564.5,371.1 566.5,371.1 568.5,371.2 570.5,371.3 572.5,371.3 574.5,371.4 576.5,371.5 578.5,371.5 580.5,371.6 582.5,371.7 584.5,371.8 586.5,371.8 588.5,371.9 590.5,371.9 592.5,372.0 594.5,372.0 596.5,372.1 598.5,372.1 600.5,372.1 602.5,372.2 604.5,372.2 606.5,372.2 608.5,372.3 610.5,372.3 612.5,372.4 614.5,372.4 616.5,372.4 618.5,372.5 620.5,372.5 622.5,372.6 624.5,372.6 626.5,372.6 628.5,372.7 630.5,372.7 632.5,372.7 634.5,372.7 636.5,372.8 638.5,372.8 640.5,372.8 642.5,372.8 644.5,372.8 646.5,372.9 648.5,372.9 650.5,372.9 652.5,372.9 654.5,372.9 656.5,373.0 658.5,373.0 660.5,373.0 662.5,373.0 664.5,373.0 666.5,373.1 668.5,373.1 670.5,373.1 672.5,373.1 674.5,373.1 676.5,373.2 678.5,373.2 680.5,373.2 682.5,373.2 684.5,373.2 686.5,373.2 688.5,373.2 690.5,373.2 692.5,373.2 694.5,373.3 696.5,373.3 698.5,373.3 700.5,373.3 702.5,373.3 704.5,373.3 706.5,373.3 708.5,373.3 710.5,373.3 712.5,373.3 714.5,373.3 716.5,373.3 718.5,373.3 720.5,373.4 722.5,373.4 724.5,373.4 726.5,373.4 728.5,373.4 730.5,373.4 732.5,373.4 734.5,373.4 736.5,373.4 738.5,373.4 740.5,373.4 742.5,373.4 744.5,373.4 746.5,373.4 748.5,373.5 750.5,373.5 752.5,373.5 754.5,373.5 756.5,373.5 758.5,373.5 760.5,373.5 762.5,373.5 764.5,373.5 766.5,373.5 768.5,373.5 770.5,373.5 772.5,373.5 774.5,373.5 776.5,373.5 778.5,373.5 780.5,373.5 782.5,373.6 784.5,373.6 786.5,373.6 788.5,373.6 790.5,373.6 792.5,373.6 794.5,373.6 796.5,373.6 798.5,373.6 800.5,373.6 802.5,373.6 804.5,373.6 806.5,373.6 808.5,373.6 810.5,373.6 812.5,373.6 814.5,373.6 816.5,373.6 818.5,373.6 820.5,373.6 822.5,373.6 824.5,373.6 826.5,373.6 828.5,373.7 830.5,373.7 832.5,373.7 834.5,373.7 836.5,373.7 838.5,373.7 840.5,373.7 842.5,373.7 844.5,373.7 846.5,373.7 848.5,373.7 850.5,373.7 852.5,373.7 854.5,373.7 856.5,373.7 858.5,373.7 860.5,373.7 862.5,373.7 864.5,373.7 866.5,373.7 868.5,373.7 870.5,373.7 872.5,373.7 874.5,373.7 876.5,373.7 878.5,373.7 880.5,373.7 882.5,373.7 884.5,373.7 886.5,373.7 888.5,373.7 890.5,373.7 892.5,373.7 894.5,373.7 896.5,373.7 898.5,373.7 900.5,373.7 902.5,373.7 904.5,373.7 906.5,373.7 908.5,373.7 910.5,373.7 912.5,373.7 914.5,373.7 916.5,373.7 918.5,373.7 920.5,373.7 922.5,373.7 924.5,373.7 926.5,373.7 928.5,373.7 930.5,373.7 932.5,373.7 934.5,373.7 936.5,373.7 938.5,373.7 940.5,373.7 942.5,373.7 944.5,373.7 946.5,373.7 948.5,373.7 950.5,373.7 952.5,373.7 954.5,373.7 956.5,373.7 958.5,373.7 960.5,373.7 962.5,373.7 964.5,373.7 966.5,373.7 968.5,373.7 970.5,373.7 972.5,373.7 974.5,373.7 976.5,373.7 978.5,373.7 980.5,373.7 982.5,373.7 984.5,373.7 986.5,373.7 988.5,373.7 990.5,373.7 992.5,373.7 994.5,373.7 996.5,373.7 998.5,373.7 1000.5,373.7 1002.5,373.7 1004.5,373.7 1006.5,373.7 1008.5,373.7 1010.5,373.7 1012.5,373.7 1014.5,373.7 1016.5,373.7 1018.5,373.7 1020.5,373.7 1022.5,373.7 1024.5,373.7 1026.5,373.7 1028.5,373.7 1030.5,373.7 1032.5,373.7 1034.5,373.7 1036.5,373.7 1038.5,373.7 1040.5,373.7 1042.5,373.7 1044.5,373.7 1046.5,373.7 1048.5,373.7 1050.5,373.7 1052.5,373.7 1054.5,373.7 1056.5,373.7 1058.5,373.7 1060.5,373.7 1062.5,373.7 1064.5,373.7 1066.5,373.7 1068.5,373.7 1070.5,373.7 1072.5,373.7 1074.5,373.7 1076.5,373.8 1078.5,374.1 1080.5,374.8 1082.5,376.9 1084.5,379.5 1086.5,379.5" stroke="#0a9a0a" stroke-width="2.4" stroke-dasharray="2 2.05" stroke-linecap="butt"/>
</g>
</svg>
<div class="ax r" style="left:300px;width:44px;top:247.0px">2</div>
<div class="ax r" style="left:300px;width:44px;top:294.0px">1</div>
<div class="ax r" style="left:300px;width:44px;top:341.0px">0</div>
<div class="ax r" style="left:300px;width:44px;top:388.0px">-1</div>
<div class="ax r" style="left:300px;width:44px;top:435.0px">-2</div>
<div class="ax" style="left:1086px;top:209px">480</div>
<div class="ax" style="left:1086px;top:249px">360</div>
<div class="ax" style="left:1086px;top:288px">240</div>
<div class="ax" style="left:1086px;top:328px">120</div>
<div class="ax" style="left:1093.2px;top:368px">0</div>
<div class="ax" style="left:1086px;top:407px">-120</div>
<div class="ax" style="left:1086px;top:447px">-240</div>
<div class="ax c" style="left:327.6px;width:40px;top:494px">2</div>
<div class="ax c" style="left:358.1px;width:40px;top:494px">3</div>
<div class="ax c" style="left:380.7px;width:40px;top:494px">4</div>
<div class="ax c" style="left:398.2px;width:40px;top:494px">5</div>
<div class="ax c" style="left:412.5px;width:40px;top:494px">6</div>
<div class="ax c" style="left:424.7px;width:40px;top:494px">7</div>
<div class="ax c" style="left:435.2px;width:40px;top:494px">8</div>
<div class="ax c" style="left:452.7px;width:40px;top:494px">10</div>
<div class="ax c" style="left:507.2px;width:40px;top:494px">20</div>
<div class="ax c" style="left:539.1px;width:40px;top:494px">30</div>
<div class="ax c" style="left:579.2px;width:40px;top:494px">50</div>
<div class="ax c" style="left:605.7px;width:40px;top:494px">70</div>
<div class="ax c" style="left:633.7px;width:40px;top:494px">100</div>
<div class="ax c" style="left:688.2px;width:40px;top:494px">200</div>
<div class="ax c" style="left:720.1px;width:40px;top:494px">300</div>
<div class="ax c" style="left:760.2px;width:40px;top:494px">500</div>
<div class="ax c" style="left:786.7px;width:40px;top:494px">700</div>
<div class="ax c" style="left:869.2px;width:40px;top:494px">2k</div>
<div class="ax c" style="left:901.1px;width:40px;top:494px">3k</div>
<div class="ax c" style="left:941.2px;width:40px;top:494px">5k</div>
<div class="ax c" style="left:967.7px;width:40px;top:494px">7k</div>
<div class="ax c" style="left:995.7px;width:40px;top:494px">10k</div>
<div class="ax" style="left:1065.5px;top:494px">24kHz</div>
<div class="abs" style="left:314px;top:198px;width:29px;height:15px;border:1px solid #0000ff;background:#fff;color:#0000ff;font-size:12px;letter-spacing:0;line-height:19px;text-align:center">3.00</div>
<div class="abs" style="left:1089px;top:198px;width:25px;height:15px;border:1px solid #0000ff;background:#fff;color:#0000ff;font-size:12px;letter-spacing:0;line-height:19px;text-align:center">507</div>
<div class="abs" style="left:821px;top:491px;width:24px;height:15px;border:1px solid #0000ff;background:#fff;color:#0000ff;font-size:12px;letter-spacing:0;line-height:18px;text-align:center">996</div>

<!-- h scrollbar -->
<div class="abs" style="left:358px;top:516px;width:714px;height:12px;background:#fff"></div>
<div class="abs" style="left:360px;top:518px;width:693px;height:8px;border-radius:4px;background:#dadada"></div>
<svg class="abs" style="left:348px;top:517px" width="7" height="10" viewBox="0 0 7 10"><path d="M6 1L1.200 5L6 9Z" fill="#6e6e6e"/></svg>
<svg class="abs" style="left:1075px;top:517px" width="7" height="10" viewBox="0 0 7 10"><path d="M1 1L5.800 5L1 9Z" fill="#6e6e6e"/></svg>

<!-- legend -->
<div class="abs" style="left:356px;top:532px;width:732px;height:74px;box-sizing:border-box;border:1px solid #d0d0d0;background:#fff"></div>
<div class="cb" style="left:364px;top:538px"></div>
<div class="cb g" style="left:364px;top:562px"></div>
<div class="cb g" style="left:364px;top:586px"></div>
<div class="cb" style="left:725px;top:538px"></div>
<div class="cb g" style="left:725px;top:562px"></div>
<div class="cb g" style="left:725px;top:586px"></div>
<svg class="abs" style="left:364px;top:538px" width="376" height="40" viewBox="0 0 376 40" fill="none" stroke-width="1.700" stroke-linecap="round" stroke-linejoin="round">
<path d="M3.600 7.600L6.300 10.600L11 4.200" stroke="#1a73e8"/><path d="M364.600 7.600L367.300 10.600L372 4.200" stroke="#1a73e8"/>
<path d="M3.600 31.600L6.300 34.600L11 28.200" stroke="#8a8a8a"/><path d="M364.600 31.600L367.300 34.600L372 28.200" stroke="#8a8a8a"/>
</svg>
<div class="abs" style="left:536px;top:544.500px;width:58px;height:2.200px;background:#d40000"></div>
<svg class="abs" style="left:897px;top:544px" width="58" height="4" viewBox="0 0 58 4"><path d="M0.800 1.700H56" stroke="#0a8a0a" stroke-width="2" stroke-dasharray="2 2"/></svg>

<!-- status bar -->
<div class="abs" style="left:10px;top:608px;width:1148px;height:1px;background:#dedede"></div>
<div class="abs" style="left:10px;top:609px;width:1148px;height:4px;background:#f3f3f3"></div>
<div class="abs" style="left:102px;top:609px;width:1px;height:4px;background:#dcdcdc"></div>
<div class="abs" style="left:152px;top:609px;width:1px;height:4px;background:#dcdcdc"></div>
<div class="abs" style="left:312px;top:609px;width:1px;height:4px;background:#dcdcdc"></div>
<div class="abs" style="left:545px;top:609px;width:1px;height:4px;background:#dcdcdc"></div>
<div class="abs" style="left:651px;top:609px;width:1px;height:4px;background:#dcdcdc"></div>
<div class="abs" style="left:788px;top:609px;width:1px;height:4px;background:#dcdcdc"></div>
<div class="abs" style="left:1067px;top:609px;width:1px;height:4px;background:#dcdcdc"></div>
<div class="t" style="left:17.54px;top:32.84px;letter-spacing:0.507px">File</div>
<div class="t" style="left:54.06px;top:32.84px;letter-spacing:0.810px">Tools</div>
<div class="t" style="left:100.54px;top:32.84px;letter-spacing:0.420px">Preferences</div>
<div class="t" style="left:184.50px;top:32.84px;letter-spacing:0.665px">Graph</div>
<div class="t" style="left:235.64px;top:32.84px;letter-spacing:0.560px">Help</div>
<div class="t" style="left:277.54px;top:32.84px;letter-spacing:0.768px">Donate</div>
<div class="t" style="left:335.44px;top:32.84px;letter-spacing:0.438px">Pro upgrades</div>
<div class="t" style="left:22.44px;top:96.84px;letter-spacing:0.577px">Measure</div>
<div class="t" style="left:90.76px;top:96.84px;letter-spacing:0.507px">Open</div>
<div class="t" style="left:139.76px;top:96.84px;letter-spacing:0.557px">Save all</div>
<div class="t" style="left:203.64px;top:96.84px;letter-spacing:0.609px">Remove all</div>
<div class="t" style="left:283.32px;top:96.84px;letter-spacing:1.393px">Info</div>
<div class="t" style="left:377.12px;top:96.84px;letter-spacing:0.780px">IR windows</div>
<div class="t" style="left:454.86px;top:96.84px;letter-spacing:0.768px">SPL meter</div>
<div class="t" style="left:534.80px;top:96.84px;letter-spacing:0.665px">Generator</div>
<div class="t" style="left:611.76px;top:96.84px;letter-spacing:0.375px">Scope</div>
<div class="t" style="left:664.44px;top:96.84px;letter-spacing:0.720px">Levels</div>
<div class="t" style="left:719.76px;top:96.84px;letter-spacing:0.531px">Overlays</div>
<div class="t" style="left:792.54px;top:96.84px;letter-spacing:0.850px">RTA</div>
<div class="t" style="left:846.44px;top:96.84px;letter-spacing:-0.580px">EQ</div>
<div class="t" style="left:880.24px;top:96.84px;letter-spacing:0.883px">Room sim</div>
<div class="t" style="left:950.30px;top:96.84px;letter-spacing:0.884px">Arithmetic</div>
<div class="t" style="left:1077.44px;top:96.84px;letter-spacing:0.410px">Preferences</div>
<div class="t" style="left:212.76px;top:127.24px;letter-spacing:0.571px">Show all</div>
<div class="t" style="left:131.26px;top:159.24px;letter-spacing:0.392px;color:#0000ee">Soundcard</div>
<div class="t" style="left:302.80px;top:159.04px;letter-spacing:0.653px">Capture</div>
<div class="t" style="left:360.56px;top:147.14px;letter-spacing:0.300px">SPL &amp; Phase</div>
<div class="t" style="left:450.10px;top:147.14px;letter-spacing:0.133px">All SPL</div>
<div class="t" style="left:505.34px;top:147.14px;letter-spacing:0.809px">Distortion</div>
<div class="t" style="left:578.12px;top:147.14px;letter-spacing:1.110px">Impulse</div>
<div class="t" style="left:641.34px;top:147.14px;letter-spacing:0.692px">Filtered IR</div>
<div class="t" style="left:718.50px;top:147.14px;letter-spacing:0.640px">GD</div>
<div class="t" style="left:752.04px;top:147.14px;letter-spacing:0.527px">RT60</div>
<div class="t" style="left:798.24px;top:147.14px;letter-spacing:0.453px">RT60 Decay</div>
<div class="t" style="left:929.76px;top:160.84px;letter-spacing:0.491px">Scrollbars</div>
<div class="t" style="left:994.64px;top:160.84px;letter-spacing:0.593px">Freq. Axis</div>
<div class="t" style="left:1060.44px;top:160.84px;letter-spacing:1.152px">Limits</div>
<div class="t" style="left:1104.70px;top:160.84px;letter-spacing:0.589px">Controls</div>
<div class="t" style="left:383.46px;top:537.94px;letter-spacing:0.455px;color:#d0001a">Soundcard</div>
<div class="t" style="left:383.04px;top:561.94px;letter-spacing:0.483px;color:#b9b9c6">Min phase</div>
<div class="t" style="left:383.24px;top:585.94px;letter-spacing:0.303px;color:#b9b9c6">Mic Cal</div>
<div class="t" style="left:744.14px;top:537.94px;letter-spacing:0.305px;color:#0a8a0a">Phase</div>
<div class="t" style="left:744.14px;top:561.94px;letter-spacing:0.313px;color:#b9b9c6">Excess phase</div>
<div class="t" style="left:744.66px;top:585.94px;letter-spacing:0.382px;color:#b9b9c6">Soundcard Cal</div>
<div class="t" style="left:649.58px;top:537.94px;letter-spacing:0.548px;color:#d0001a">0.0 dB</div>
<div class="t" style="left:665.62px;top:561.94px;letter-spacing:0.760px;color:#b9b9c6">deg</div>
<div class="t" style="left:671.92px;top:585.94px;letter-spacing:0.640px;color:#b9b9c6">dB</div>
<div class="t" style="left:1004.88px;top:537.94px;letter-spacing:0.553px;color:#0a8a0a">0.3 deg</div>
<div class="t" style="left:1026.92px;top:561.94px;letter-spacing:0.710px;color:#b9b9c6">deg</div>
<div class="t" style="left:1033.02px;top:585.94px;letter-spacing:0.540px;color:#b9b9c6">dB</div>
</div>
</body></html>
